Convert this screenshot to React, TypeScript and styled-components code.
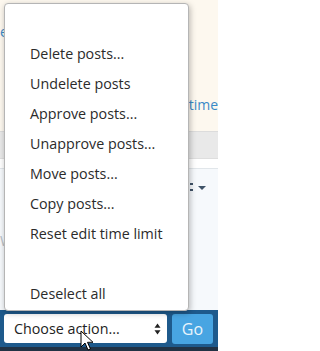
import React from "react";
import styled, { createGlobalStyle } from "styled-components";

const Global = createGlobalStyle`
  html, body { margin: 0; padding: 0; width: 218px; height: 351px; overflow: hidden; }
  body { font-family: "Open Sans", "Noto Sans", sans-serif; }
`;

const Page = styled.div`
  position: relative;
  width: 218px;
  height: 351px;
  display: flex;
  flex-direction: column;
  overflow: hidden;
`;

const Notice = styled.div`
  height: 131px;
  background: #fdf8ef;
  position: relative;
  font-size: 14px;
  color: #3a8ac7;
`;

const EdgeText = styled.span<{ $top: number; $left?: number; $right?: number }>`
  position: absolute;
  top: ${(p) => p.$top}px;
  ${(p) => (p.$left !== undefined ? `left: ${p.$left}px;` : "")}
  ${(p) => (p.$right !== undefined ? `right: ${p.$right}px;` : "")}
  white-space: nowrap;
  line-height: 18px;
`;

const GrayBand = styled.div`
  height: 26px;
  background: #e9e9e9;
  border-top: 1px solid #dcdcdc;
  border-bottom: 1px solid #dedede;
`;

const WhiteStrip = styled.div`
  height: 9px;
  background: #ffffff;
  border-bottom: 1px solid #e1e6ea;
`;

const ListArea = styled.div`
  flex: 1;
  background: #f6f9fc;
  position: relative;
  color: #3b4a5a;
  font-size: 13px;
`;

const Caret = styled.span`
  position: absolute;
  top: 17px;
  right: 12px;
  width: 0;
  height: 0;
  border-left: 4px solid transparent;
  border-right: 4px solid transparent;
  border-top: 4px solid #3f5368;
`;

const Colon = styled.span`
  position: absolute;
  top: 14px;
  right: 25px;
  width: 3px;
  display: flex;
  flex-direction: column;
  gap: 4px;
  &::before, &::after {
    content: "";
    display: block;
    width: 3px;
    height: 2px;
    background: #3f5368;
  }
`;

const FaintLetter = styled.span`
  position: absolute;
  top: 62px;
  left: 0;
  color: #b9c0c7;
  font-size: 14px;
  white-space: nowrap;
`;

const Toolbar = styled.div`
  height: 37px;
  background: #1e5a8c;
  display: flex;
  align-items: center;
  gap: 5px;
  padding: 0 5px 0 4px;
  border-bottom: 4px solid #213244;
`;

const Select = styled.div`
  width: 163px;
  height: 29px;
  box-sizing: border-box;
  background: #ffffff;
  border-radius: 3px;
  display: flex;
  align-items: center;
  justify-content: space-between;
  padding: 0 6px 0 10px;
  font-size: 14.3px;
  color: #222;
`;

const GoButton = styled.div`
  width: 41px;
  height: 30px;
  background: #48a5e2;
  border-radius: 3px;
  color: #eaf5fc;
  font-size: 16px;
  display: flex;
  align-items: center;
  justify-content: center;
`;

const Menu = styled.div`
  position: absolute;
  top: 3px;
  left: 4px;
  width: 185px;
  box-sizing: border-box;
  background: #ffffff;
  border: 1px solid #b5b5b5;
  border-radius: 4px;
  box-shadow: 1px 2px 6px rgba(0, 0, 0, 0.28);
  padding: 4px 0 2px;
  display: flex;
  flex-direction: column;
`;

const Item = styled.div`
  height: 30px;
  display: flex;
  align-items: center;
  padding-left: 25px;
  font-size: 14.3px;
  color: #2b2b2b;
  white-space: nowrap;
`;

const Cursor = styled.svg`
  position: absolute;
  left: 80px;
  top: 330px;
`;

const items = [
  "",
  "Delete posts...",
  "Undelete posts",
  "Approve posts...",
  "Unapprove posts...",
  "Move posts...",
  "Copy posts...",
  "Reset edit time limit",
  "",
  "Deselect all",
];

export default function App() {
  return (
    <Page>
      <Global />
      <Notice>
        <EdgeText $top={23} $left={0}>e</EdgeText>
        <EdgeText $top={96} $right={0}>t time</EdgeText>
      </Notice>
      <GrayBand />
      <WhiteStrip />
      <ListArea>
        <Colon />
        <Caret />
        <FaintLetter>W</FaintLetter>
      </ListArea>
      <Toolbar>
        <Select>
          <span>Choose action...</span>
          <svg width="7" height="12" viewBox="0 0 7 12">
            <path d="M3.5 0.5 L6.5 4.8 H0.5 Z" fill="#222" />
            <path d="M3.5 11.5 L6.5 7.2 H0.5 Z" fill="#222" />
          </svg>
        </Select>
        <GoButton>Go</GoButton>
      </Toolbar>
      <Menu>
        {items.map((t, i) => (
          <Item key={i}>{t}</Item>
        ))}
      </Menu>
      <Cursor width="14" height="22" viewBox="0 0 14 22">
        <path
          d="M1 1 L1 17 L5 13 L8 20 L10.5 19 L7.5 12.3 L13 12.3 Z"
          fill="#ffffff"
          stroke="#000000"
          strokeWidth="1"
          strokeLinejoin="round"
        />
      </Cursor>
    </Page>
  );
}
